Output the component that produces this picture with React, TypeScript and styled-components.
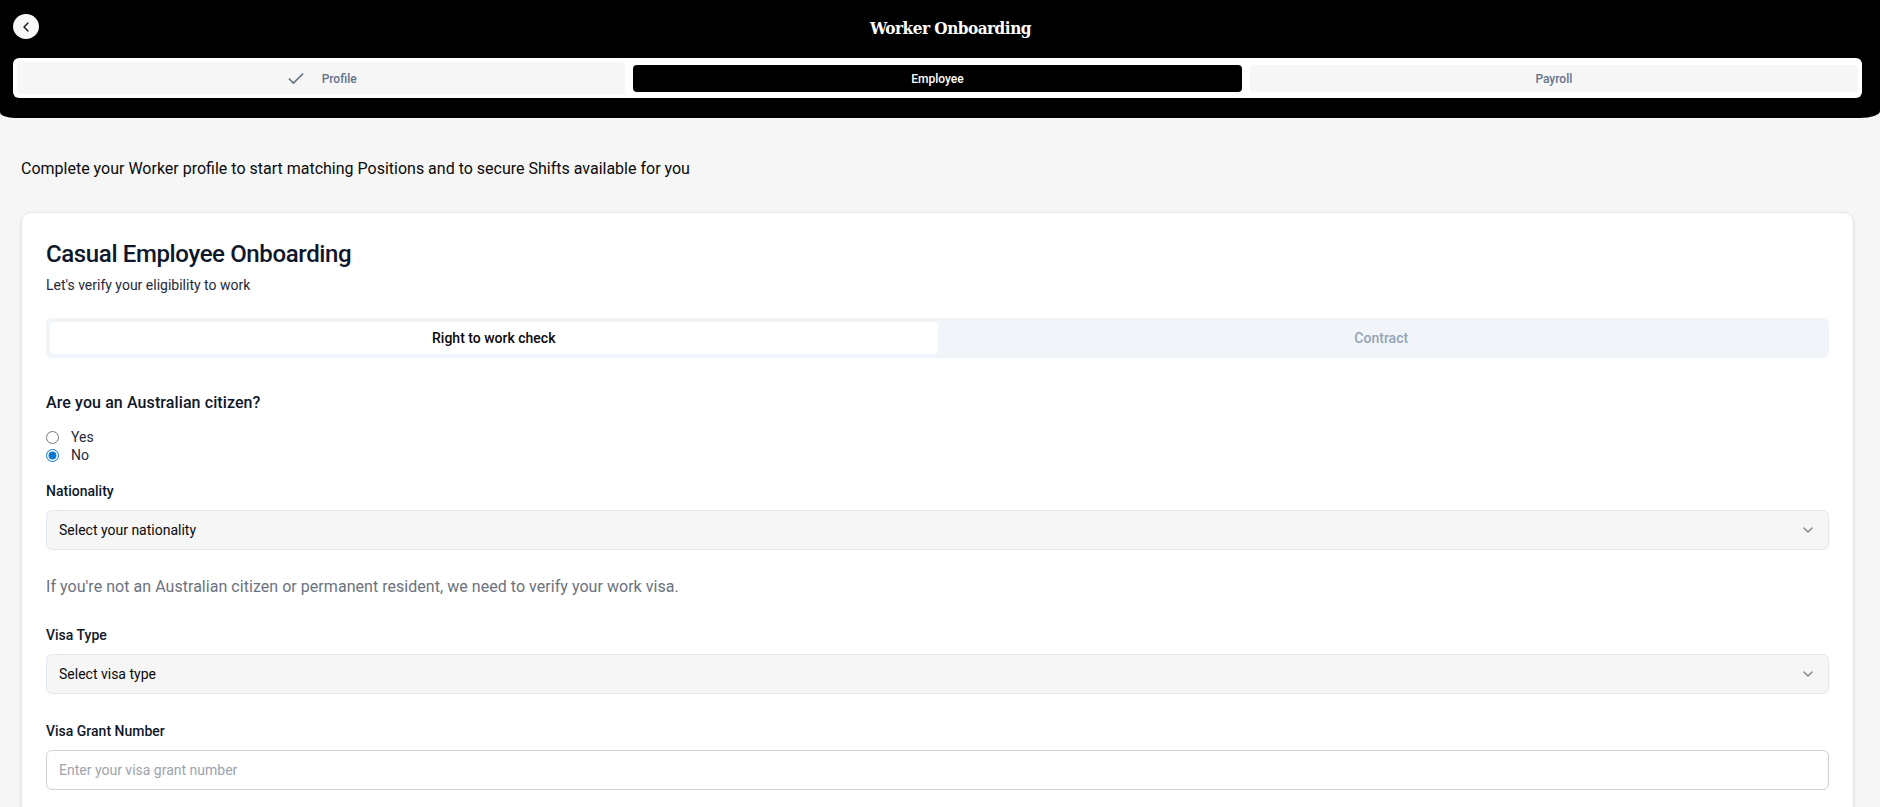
import React from 'react'
import styled, { createGlobalStyle } from 'styled-components'
import { Check, ChevronDown, ChevronLeft } from 'lucide-react'

const GlobalStyle = createGlobalStyle`
  html, body {
    margin: 0;
    padding: 0;
    height: 807px;
    overflow: hidden;
    background: #f6f6f6;
  }
  * {
    box-sizing: border-box;
  }
  body {
    font-family: Roboto, "Open Sans", sans-serif;
  }
`

const Page = styled.div`
  height: 807px;
  overflow: hidden;
`

const Header = styled.header`
  background: #000;
  height: 118px;
  border-radius: 0 0 20px 15px / 0 0 7px 6px;
  padding: 14px 18px 0 13px;
`

const TitleRow = styled.div`
  height: 44px;
  display: flex;
  align-items: flex-start;
`

const BackButton = styled.button`
  flex: none;
  width: 26px;
  height: 25px;
  border: 0;
  border-radius: 50%;
  background: #f8f8f8;
  padding: 0;
  display: flex;
  align-items: center;
  justify-content: center;
  color: #111;
`

const Title = styled.h1`
  flex: 1;
  margin: 3px 0 0;
  text-align: center;
  color: #fff;
  font-family: "DejaVu Serif Condensed", "DejaVu Serif", serif;
  font-size: 17px;
  letter-spacing: -0.5px;
  line-height: 22px;
  font-weight: 700;
`

const Steps = styled.nav`
  height: 40px;
  background: #fff;
  border-radius: 6px;
  padding: 0 4px;
  display: grid;
  grid-template-columns: repeat(3, 1fr);
  gap: 8px;
  align-items: center;
`

const Step = styled.div<{ $active?: boolean; $tall?: boolean }>`
  height: ${(p) => (p.$tall ? 32 : 27)}px;
  border-radius: 4px;
  background: ${(p) => (p.$active ? '#000' : '#f6f6f6')};
  color: ${(p) => (p.$active ? '#fff' : '#64748b')};
  font-size: 12px;
  font-weight: 500;
  padding-top: 1px;
  display: flex;
  align-items: center;
  justify-content: center;
  gap: 16px;
`

const Main = styled.main`
  padding: 0 26px 0 21px;
`

const Intro = styled.p`
  margin: 0;
  padding-top: 40px;
  height: 94px;
  font-size: 16px;
  line-height: 22px;
  color: #0a0a0a;
`

const Card = styled.section`
  background: #fff;
  border: 1px solid #e8e8ec;
  border-radius: 10px;
  box-shadow: 0 1px 3px rgba(0, 0, 0, 0.1);
  padding: 25px 24px 40px 24px;
`

const CardTitle = styled.h2`
  margin: 0;
  font-size: 24px;
  letter-spacing: -0.37px;
  line-height: 32px;
  font-weight: 500;
  color: #0f172a;
`

const CardSubtitle = styled.p`
  margin: 5px 0 0;
  font-size: 14px;
  line-height: 20px;
  color: #1e293b;
`

const Tabs = styled.div`
  margin-top: 23px;
  height: 40px;
  border-radius: 6px;
  background: #f1f5f9;
  padding: 4px;
  display: grid;
  grid-template-columns: 1fr 1fr;
`

const Tab = styled.div<{ $active?: boolean }>`
  border-radius: 4px;
  background: ${(p) => (p.$active ? '#fff' : 'transparent')};
  color: ${(p) => (p.$active ? '#0a0a0a' : '#94a3b8')};
  font-size: 14px;
  font-weight: 500;
  display: flex;
  align-items: center;
  justify-content: center;
`

const Question = styled.h3`
  margin: 34px 0 0;
  font-size: 16px;
  letter-spacing: 0.1px;
  line-height: 22px;
  font-weight: 500;
  color: #0f172a;
`

const RadioGroup = styled.div`
  margin-top: 14px;
  display: flex;
  flex-direction: column;
  gap: 0;
`

const RadioRow = styled.label`
  height: 18px;
  display: flex;
  align-items: center;
  gap: 12px;
  font-size: 14px;
  color: #1e293b;
`

const RadioInput = styled.input`
  margin: 0;
  width: 13px;
  height: 13px;
  accent-color: #0b78d6;
`

const Label = styled.label<{ $top: number }>`
  display: block;
  margin-top: ${(p) => p.$top}px;
  font-size: 14px;
  line-height: 20px;
  font-weight: 500;
  color: #0f172a;
`

const Select = styled.div`
  margin-top: 9px;
  height: 40px;
  background: #f6f6f7;
  border: 1px solid #e2e8f0;
  border-radius: 6px;
  padding: 0 12px;
  display: flex;
  align-items: center;
  justify-content: space-between;
  font-size: 14px;
  color: #0a0a0a;
  svg {
    opacity: 0.5;
  }
`

const Note = styled.p`
  margin: 26px 0 0;
  font-size: 16px;
  letter-spacing: 0.04px;
  line-height: 22px;
  color: #6b7280;
`

const TextInput = styled.input`
  display: block;
  width: 100%;
  margin-top: 9px;
  height: 40px;
  background: #fff;
  border: 1px solid #cfd0dc;
  border-radius: 6px;
  padding: 0 12px;
  font-family: inherit;
  font-size: 14px;
  &::placeholder {
    color: #9ca3af;
  }
`

export default function App() {
  return (
    <Page>
      <GlobalStyle />
      <Header>
        <TitleRow>
          <BackButton aria-label="Back">
            <ChevronLeft size={16} />
          </BackButton>
          <Title>Worker Onboarding</Title>
        </TitleRow>
        <Steps>
          <Step $tall>
            <Check size={20} />
            Profile
          </Step>
          <Step $active>Employee</Step>
          <Step>Payroll</Step>
        </Steps>
      </Header>
      <Main>
        <Intro>Complete your Worker profile to start matching Positions and to secure Shifts available for you</Intro>
        <Card>
          <CardTitle>Casual Employee Onboarding</CardTitle>
          <CardSubtitle>Let's verify your eligibility to work</CardSubtitle>
          <Tabs>
            <Tab $active>Right to work check</Tab>
            <Tab>Contract</Tab>
          </Tabs>
          <Question>Are you an Australian citizen?</Question>
          <RadioGroup>
            <RadioRow>
              <RadioInput type="radio" name="citizen" readOnly />
              Yes
            </RadioRow>
            <RadioRow>
              <RadioInput type="radio" name="citizen" defaultChecked />
              No
            </RadioRow>
          </RadioGroup>
          <Label $top={17}>Nationality</Label>
          <Select>
            Select your nationality
            <ChevronDown size={16} />
          </Select>
          <Note>If you're not an Australian citizen or permanent resident, we need to verify your work visa.</Note>
          <Label $top={27}>Visa Type</Label>
          <Select>
            Select visa type
            <ChevronDown size={16} />
          </Select>
          <Label $top={27}>Visa Grant Number</Label>
          <TextInput placeholder="Enter your visa grant number" />
        </Card>
      </Main>
    </Page>
  )
}
